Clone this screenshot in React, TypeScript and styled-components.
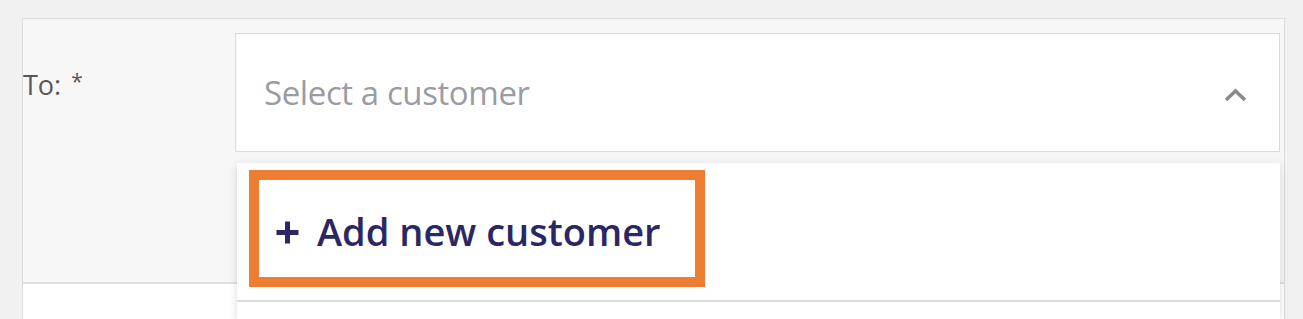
import React from 'react';
import styled, { createGlobalStyle } from 'styled-components';

const GlobalStyle = createGlobalStyle`
  html, body {
    margin: 0;
    padding: 0;
    background: #f1f1f1;
    font-family: "Open Sans", "Noto Sans", sans-serif;
    overflow: hidden;
  }
`;

const Page = styled.div`
  padding: 18px 18px 0 22px;
  height: 319px;
  box-sizing: border-box;
  overflow: hidden;
`;

const Panel = styled.div`
  border: 1px solid #dcdcdc;
  border-bottom: none;
  background: #f7f7f7;
  height: 301px;
  box-sizing: border-box;
`;

const Row = styled.div<{ $white?: boolean }>`
  display: grid;
  grid-template-columns: 212px 1fr;
  height: ${({ $white }) => ($white ? '36px' : '263px')};
  background: ${({ $white }) => ($white ? '#ffffff' : '#f7f7f7')};
  border-bottom: ${({ $white }) => ($white ? 'none' : '2px solid #dedede')};
`;

const Label = styled.label`
  padding-top: 47px;
  font-size: 27px;
  line-height: 38px;
  color: #575757;
  white-space: nowrap;
`;

const Required = styled.span`
  font-size: 21px;
  vertical-align: top;
  line-height: 30px;
  margin-left: 3px;
`;

const Field = styled.div`
  position: relative;
  padding: 14px 4px 0 0;
`;

const SelectBox = styled.div`
  display: flex;
  align-items: center;
  justify-content: space-between;
  height: 119px;
  box-sizing: border-box;
  padding: 0 31px 0 28px;
  background: #ffffff;
  border: 1px solid #dadada;
`;

const Placeholder = styled.span`
  font-size: 33px;
  letter-spacing: -0.4px;
  color: #9b9ba2;
`;

const Chevron = styled.svg`
  width: 25px;
  height: 16px;
  margin-top: 4px;
`;

const Menu = styled.div`
  position: absolute;
  top: 144px;
  left: 2px;
  right: 4px;
  height: 156px;
  background: #ffffff;
  box-shadow: 0 2px 8px rgba(40, 40, 80, 0.16);
`;

const Option = styled.div`
  height: 139px;
  box-sizing: border-box;
  padding: 7px 0 0 12px;
  border-bottom: 2px solid #dcdcdc;
`;

const Highlight = styled.div`
  display: flex;
  align-items: center;
  gap: 17px;
  width: 456px;
  height: 117px;
  box-sizing: border-box;
  padding: 4px 0 0 16px;
  border: 10px solid #ed7d31;
`;

const AddText = styled.span`
  font-size: 38px;
  font-weight: 600;
  color: #2b2664;
  white-space: nowrap;
`;

const PlusIcon = styled.svg`
  width: 25px;
  height: 25px;
  flex: none;
  margin-top: 4px;
`;

export default function App() {
  return (
    <>
      <GlobalStyle />
      <Page>
        <Panel>
          <Row>
            <Label>
              To:{' '}<Required>*</Required>
            </Label>
            <Field>
              <SelectBox>
                <Placeholder>Select a customer</Placeholder>
                <Chevron viewBox="0 0 25 16">
                  <polyline
                    points="3,13 12.5,4 22,13"
                    fill="none"
                    stroke="#8a8a8a"
                    strokeWidth="3.6"
                  />
                </Chevron>
              </SelectBox>
              <Menu>
                <Option>
                  <Highlight>
                    <PlusIcon viewBox="0 0 25 25">
                      <path d="M12.5 1.5v22M1.5 12.5h22" stroke="#2b2664" strokeWidth="5" />
                    </PlusIcon>
                    <AddText>Add new customer</AddText>
                  </Highlight>
                </Option>
              </Menu>
            </Field>
          </Row>
          <Row $white>
            <div />
            <div />
          </Row>
        </Panel>
      </Page>
    </>
  );
}
